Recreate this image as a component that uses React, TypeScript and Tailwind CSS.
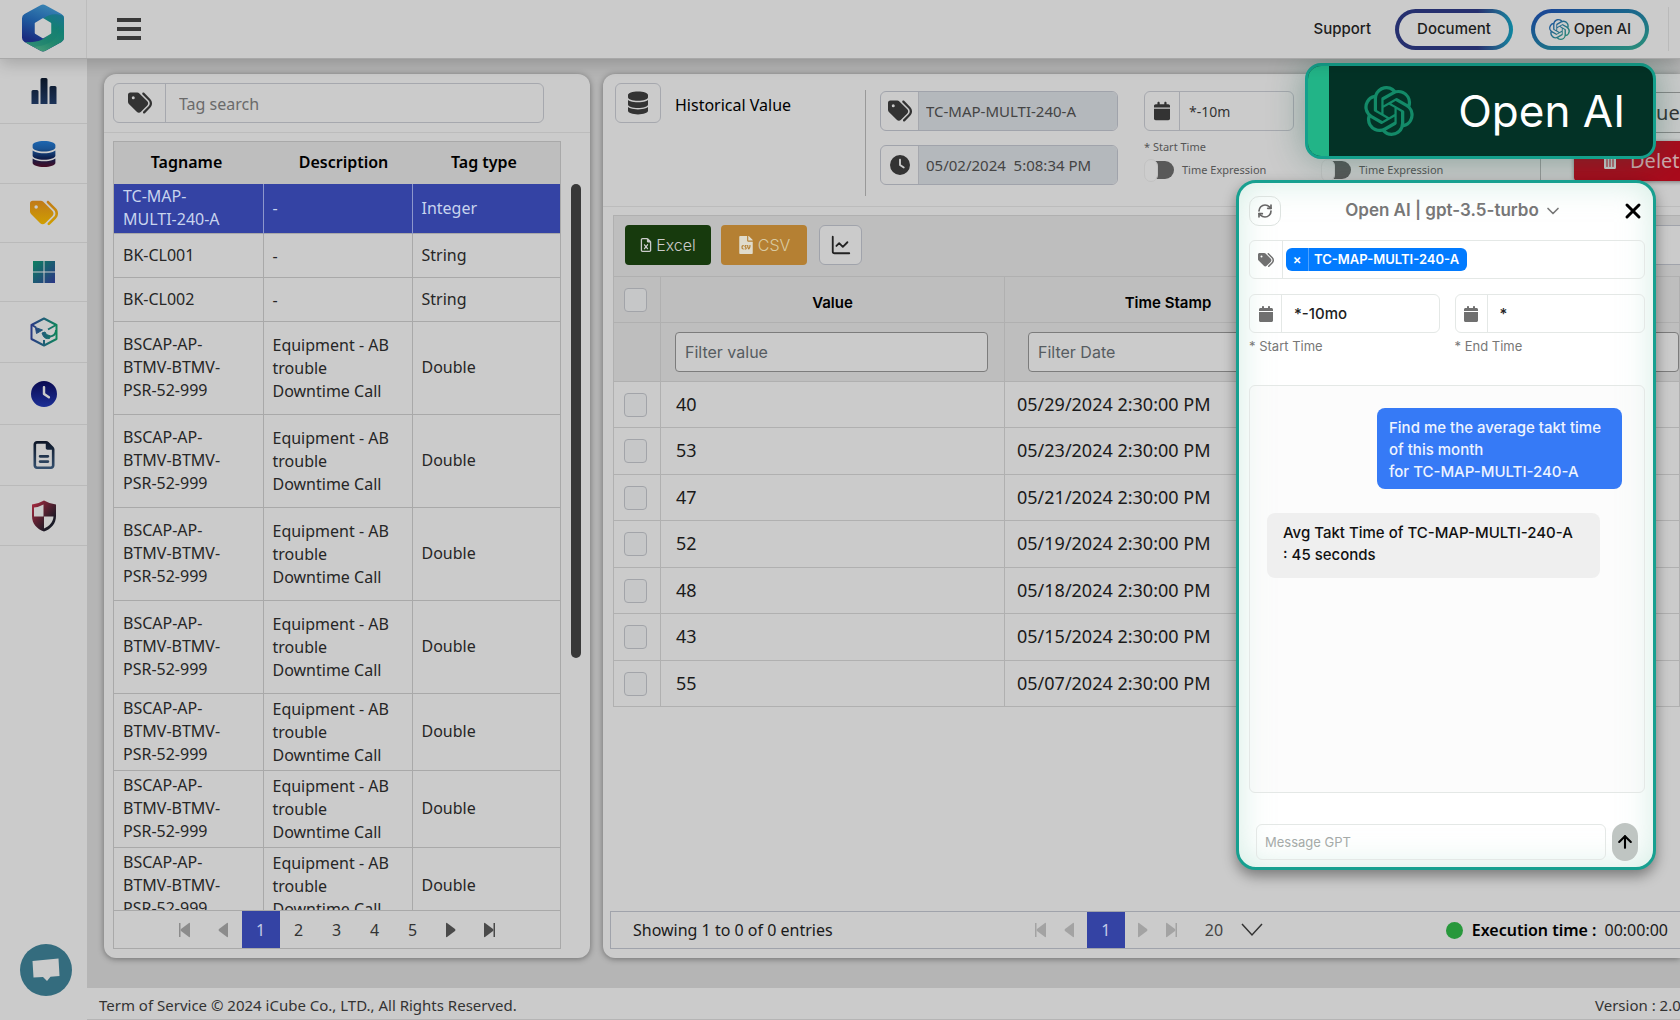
import { useState } from 'react';
import type { ReactNode } from 'react';
import { FaTags, FaDatabase, FaClock, FaRegFileExcel, FaRegFileLines, FaCalendar } from 'react-icons/fa6';
import { FaFileCsv, FaTrashAlt } from 'react-icons/fa';
import { SiOpenai } from 'react-icons/si';
import { ArrowUp, ChevronDown, LineChart, RefreshCw, X } from 'lucide-react';

interface Tag {
  name: string;
  description: string;
  type: string;
  height: string;
}

const BSCAP = { name: 'BSCAP-AP-BTMV-BTMV-PSR-52-999', description: 'Equipment - AB trouble Downtime Call', type: 'Double' };

const TAGS: Tag[] = [
  { name: 'BK-CL001', description: '-', type: 'String', height: 'h-11' },
  { name: 'BK-CL002', description: '-', type: 'String', height: 'h-11' },
  { ...BSCAP, height: 'h-[93px]' },
  { ...BSCAP, height: 'h-[93px]' },
  { ...BSCAP, height: 'h-[93px]' },
  { ...BSCAP, height: 'h-[93px]' },
  { ...BSCAP, height: 'h-[77px]' },
  { ...BSCAP, height: 'h-[77px]' },
  { ...BSCAP, height: 'h-[77px]' },
];

const VALUES = [
  { value: 40, time: '05/29/2024 2:30:00 PM' },
  { value: 53, time: '05/23/2024 2:30:00 PM' },
  { value: 47, time: '05/21/2024 2:30:00 PM' },
  { value: 52, time: '05/19/2024 2:30:00 PM' },
  { value: 48, time: '05/18/2024 2:30:00 PM' },
  { value: 43, time: '05/15/2024 2:30:00 PM' },
  { value: 55, time: '05/07/2024 2:30:00 PM' },
];

function Gradients() {
  const defs = [
    ['g-bars', '#0a1526', '#1c3358'],
    ['g-tags', '#c07a18', '#d0a000'],
    ['g-clock', '#0a0a50', '#1c2f96'],
    ['g-file', '#0c1526', '#34506f'],
  ];
  return (
    <svg className="absolute h-0 w-0" aria-hidden>
      <defs>
        {defs.map(([id, from, to]) => (
          <linearGradient key={id} id={id} x1="0" y1="0" x2="0" y2="1">
            <stop offset="0" stopColor={from} />
            <stop offset="1" stopColor={to} />
          </linearGradient>
        ))}
        <linearGradient id="g-db" x1="0" y1="0" x2="0" y2="1">
          <stop offset="0" stopColor="#1d66b0" />
          <stop offset="0.3" stopColor="#1a5494" />
          <stop offset="0.65" stopColor="#0d1f4c" />
          <stop offset="1" stopColor="#4a0d24" />
        </linearGradient>
        <linearGradient id="g-grid" gradientUnits="userSpaceOnUse" x1="0" y1="0" x2="22" y2="22">
          <stop offset="0" stopColor="#0d8060" />
          <stop offset="1" stopColor="#2b3585" />
        </linearGradient>
        <linearGradient id="g-cube" gradientUnits="userSpaceOnUse" x1="0" y1="0" x2="28" y2="0">
          <stop offset="0" stopColor="#2b3585" />
          <stop offset="0.5" stopColor="#1f6076" />
          <stop offset="1" stopColor="#0d8858" />
        </linearGradient>
        <linearGradient id="g-shield" x1="0" y1="0" x2="1" y2="1">
          <stop offset="0" stopColor="#b02a40" />
          <stop offset="0.75" stopColor="#1c1a26" />
          <stop offset="1" stopColor="#14202e" />
        </linearGradient>
        <linearGradient id="g-ai" x1="0" y1="0" x2="1" y2="1">
          <stop offset="0" stopColor="#1c4fa0" />
          <stop offset="1" stopColor="#2c9070" />
        </linearGradient>
      </defs>
    </svg>
  );
}

function Logo() {
  return (
    <svg className="h-12 w-[42px]" viewBox="0 0 42 48" aria-label="iCube">
      <defs>
        <clipPath id="logo-clip">
          <path d="M18.500 1.200a5 5 0 0 1 5 0l16 8.800a5 5 0 0 1 2.500 4.300v19.400a5 5 0 0 1-2.500 4.300l-16 8.800a5 5 0 0 1-5 0l-16-8.800A5 5 0 0 1 0 33.700V14.300A5 5 0 0 1 2.500 10z" />
        </clipPath>
        <linearGradient id="logo-l" x1="0.6" y1="0" x2="0.3" y2="1">
          <stop offset="0" stopColor="#3a86b4" />
          <stop offset="0.4" stopColor="#1f5ca0" />
          <stop offset="0.8" stopColor="#1a2c80" />
        </linearGradient>
        <linearGradient id="logo-r" x1="0.9" y1="0" x2="0.4" y2="1">
          <stop offset="0" stopColor="#1c7490" />
          <stop offset="0.35" stopColor="#138074" />
          <stop offset="0.7" stopColor="#22886e" />
          <stop offset="1" stopColor="#459a78" />
        </linearGradient>
      </defs>
      <g clipPath="url(#logo-clip)">
        <path d="M0 0h42v48H0z" fill="url(#logo-l)" />
        <path d="M21 15C26 10 34 9 42 12v36H10L4 38c9 1 16-1 21-6z" fill="url(#logo-r)" />
        <path d="M4 38c14 1 26-5 33-16 0 12-8 20-28 21z" fill="#1a8070" opacity="0.5" />
      </g>
      <path d="M21 15l7.500 4.500v9.500L21 33.500 13.500 29v-9.500z" fill="#cbcbcb" stroke="#cbcbcb" strokeWidth="1.500" strokeLinejoin="round" />
    </svg>
  );
}

function BarsIcon() {
  return (
    <svg className="h-[26px] w-[26px]" viewBox="0 0 26 26" fill="url(#g-bars)">
      <path d="M2 12h4a1.500 1.500 0 0 1 1.500 1.500V26h-7V13.500A1.500 1.500 0 0 1 2 12zM11 0h4a1.500 1.500 0 0 1 1.500 1.500V26h-7V1.500A1.500 1.500 0 0 1 11 0zM20 8h4a1.500 1.500 0 0 1 1.500 1.500V26h-7V9.500A1.500 1.500 0 0 1 20 8z" />
    </svg>
  );
}

function GridIcon() {
  return (
    <svg className="h-[22px] w-[22px]" viewBox="0 0 22 22" fill="url(#g-grid)">
      <path d="M0 0h10.500v10.500H0zM11.500 0H22v10.500H11.500zM0 11.500h10.500V22H0zM11.500 11.500H22V22H11.500z" />
    </svg>
  );
}

function CubeIcon() {
  return (
    <svg className="h-[30px] w-7" viewBox="0 0 28 30" fill="none" stroke="url(#g-cube)" strokeWidth="2" strokeLinejoin="round">
      <path d="M14 1.500L26.500 8v14L14 28.500 1.500 22V8z" />
      <path d="M2 8l4 2.500M26 8l-8 4.500M14 23v5" />
      <path d="M5.500 10.500l7 2.500-6 3.500z" fill="url(#g-cube)" strokeWidth="1" />
      <path d="M26 13c0 6-6 8-11 5.500" />
      <path d="M12 16l3-1 1.500 2.500 4 1.500-1 2.500c-3 .5-5-.5-6-2z" fill="url(#g-cube)" strokeWidth="1" />
    </svg>
  );
}

function ShieldIcon() {
  return (
    <svg className="h-8 w-[26px]" viewBox="0 0 26 32">
      <path d="M13 0.500Q19 4 25 4.500V16c0 8-5 13-12 15.500C6 29 1 24 1 16V4.500Q7 4 13 0.500z" fill="url(#g-shield)" />
      <path d="M12.500 4.500v12H3V7.500Q8 7 12.500 4.500zM13 16.500h9.500c-.5 6-4 9.500-9.500 12z" fill="#cbcbcb" />
    </svg>
  );
}

const NAV: { label: string; height: string; icon: ReactNode }[] = [
  { label: 'Dashboard', height: 'h-[65px]', icon: <BarsIcon /> },
  { label: 'Database', height: 'h-[60px]', icon: <FaDatabase className="h-[26px] w-6" fill="url(#g-db)" /> },
  { label: 'Tags', height: 'h-[59px]', icon: <FaTags className="h-7 w-7" fill="url(#g-tags)" /> },
  { label: 'Display', height: 'h-[59px]', icon: <GridIcon /> },
  { label: 'Assets', height: 'h-[61px]', icon: <CubeIcon /> },
  { label: 'History', height: 'h-[62px]', icon: <FaClock className="h-[26px] w-[26px]" fill="url(#g-clock)" /> },
  { label: 'Report', height: 'h-[61px]', icon: <FaRegFileLines className="h-7 w-6" fill="url(#g-file)" /> },
  { label: 'Security', height: 'h-[60px]', icon: <ShieldIcon /> },
];

function Sidebar() {
  return (
    <aside className="flex w-[87px] shrink-0 flex-col bg-[#cbcbcb]">
      <nav>
        {NAV.map((item) => (
          <a
            key={item.label}
            href="#"
            aria-label={item.label}
            className={`flex items-center justify-center border-b border-[#bababa] pl-px ${item.height}`}
          >
            {item.icon}
          </a>
        ))}
      </nav>
      <button
        type="button"
        aria-label="Chat"
        className="mt-auto mb-6 ml-5 flex h-[52px] w-[52px] items-center justify-center rounded-full bg-[#346c7e]"
      >
        <svg className="h-6 w-7" viewBox="0 0 28 24" fill="#cbcbcb">
          <path d="M0.500 3L26.500 0.500 27.500 18l-9 .8-3.500 4.200-4-4L1.500 19.500z" />
        </svg>
      </button>
    </aside>
  );
}

function Header() {
  return (
    <header className="relative z-10 flex h-[59px] shrink-0 items-center border-b border-[#a8a8a8] bg-[#cbcbcb] font-['Inter',sans-serif] shadow-[0_4px_16px_rgba(0,0,0,0.2)]">
      <div className="flex h-full w-[87px] items-center justify-center border-r border-[#bdbdbd] pb-[3px]">
        <Logo />
      </div>
      <button type="button" aria-label="Menu" className="ml-[30px] flex flex-col gap-[5px]">
        <span className="h-1 w-6 bg-[#383838]" />
        <span className="h-1 w-6 bg-[#383838]" />
        <span className="h-1 w-6 bg-[#383838]" />
      </button>
      <div className="mr-[11px] ml-auto flex items-center text-[15px] font-medium text-[#1d1d1d]">
        <a href="#" className="mr-6">Support</a>
        <a href="#" className="mr-[18px] rounded-full bg-linear-to-r from-[#26306f] from-70% to-[#0a86a0] p-1">
          <span className="flex h-[33px] w-[110px] items-center justify-center rounded-full bg-[#cbcbcb]">Document</span>
        </a>
        <a href="#" className="mr-[19px] rounded-full bg-linear-to-br from-[#1c3f96] to-[#2c9078] p-1">
          <span className="flex h-[33px] w-[110px] items-center justify-center gap-1 rounded-full bg-[#cbcbcb]">
            <SiOpenai className="h-[21px] w-[21px]" fill="url(#g-ai)" />
            Open AI
          </span>
        </a>
        <span className="h-11 w-px bg-[#bababa]" />
      </div>
    </header>
  );
}

function PrevIcon({ bar }: { bar?: boolean }) {
  return (
    <svg className="h-4 w-[14px]" viewBox="0 0 14 16" fill="currentColor">
      {bar && <path d="M1 1h1.500v14H1z" />}
      <path d="M12 1.500v13q0 1-1 .5L3 9Q2 8 3 7l8-6q1-.5 1 .5z" />
    </svg>
  );
}

function NextIcon({ bar }: { bar?: boolean }) {
  return (
    <svg className="h-4 w-[14px]" viewBox="0 0 14 16" fill="currentColor">
      {bar && <path d="M11.500 1H13v14h-1.500z" />}
      <path d="M2 1.500v13q0 1 1 .5l8-6q1-1 0-2L3 1Q2 .5 2 1.500z" />
    </svg>
  );
}

function Pager({ pages, disabled }: { pages: number[]; disabled?: boolean }) {
  const prev = disabled ? 'text-[#a3a3a3]' : 'text-[#8c8c8c]';
  const next = disabled ? 'text-[#a3a3a3]' : 'text-[#4a4a4a]';
  const step = disabled ? 'w-7' : 'w-[38px]';
  return (
    <div className="flex h-full items-center text-base text-[#333]">
      <button type="button" aria-label="First page" className={`flex justify-center ${step} ${prev}`}><PrevIcon bar /></button>
      <button type="button" aria-label="Previous page" className={`flex justify-center ${step} ${prev}`}><PrevIcon /></button>
      {pages.map((page) => (
        <button
          key={page}
          type="button"
          className={`h-full w-[38px] ${page === 1 ? 'bg-[#3443a4] text-[#c3cbe8]' : ''} ${disabled ? 'mx-1' : ''}`}
        >
          {page}
        </button>
      ))}
      <button type="button" aria-label="Next page" className={`flex justify-center ${step} ${next}`}><NextIcon /></button>
      <button type="button" aria-label="Last page" className={`flex justify-center ${step} ${next}`}><NextIcon bar /></button>
    </div>
  );
}

function TagPanel() {
  return (
    <section className="flex w-[486px] shrink-0 flex-col rounded-xl bg-[#cbcbcb] shadow-[0_1px_6px_rgba(0,0,0,0.4)]">
      <div className="border-b border-[#bcbcbc] py-[9px] pl-[9px]">
        <div className="flex h-10 w-[431px] items-center rounded-md border border-[#a6a8ae]">
          <label htmlFor="tag-search" aria-label="Tag search" className="flex h-full w-[52px] items-center justify-center border-r border-[#a6a8ae]">
            <FaTags className="h-6 w-6 text-[#333]" />
          </label>
          <input id="tag-search" placeholder="Tag search" className="min-w-0 flex-1 px-[13px] pt-[2px] text-base outline-none placeholder:text-[#6a6a6a]" />
        </div>
      </div>
      <div className="mx-[9px] mt-2 mb-[9px] flex min-h-0 flex-1 flex-col">
        <div className="flex min-h-0 flex-1">
          <div className="w-[448px] overflow-hidden border-x border-t border-[#a9a9a9]">
            <table className="w-full table-fixed border-collapse text-left text-base leading-[23px] text-[#262626]">
              <thead>
                <tr className="h-[42px] bg-[#bebebe] text-center text-black">
                  <th className="w-[149px] pr-1 pb-[2px] font-semibold">Tagname</th>
                  <th className="w-[149px] pb-[2px] pl-3 font-semibold">Description</th>
                  <th className="pr-1 pb-[2px] font-semibold">Tag type</th>
                </tr>
              </thead>
              <tbody>
                <tr className="h-[49px] border-b border-[#a9a9a9] bg-[#3443a4] text-[#c8d4ee]">
                  <td className="border-r border-[#8d97cc] pl-[9px]">TC-MAP-<br />MULTI-240-A</td>
                  <td className="border-r border-[#8d97cc] pl-[9px]">-</td>
                  <td className="pl-[9px]">Integer</td>
                </tr>
                {TAGS.map((tag, i) => (
                  <tr key={i} className={`border-b border-[#a9a9a9] ${tag.height}`}>
                    <td className="border-r border-[#a9a9a9] pr-7 pl-[9px]">{tag.name}</td>
                    <td className="border-r border-[#a9a9a9] pt-[2px] pr-4 pl-[9px]">{tag.description}</td>
                    <td className="pl-[9px]">{tag.type}</td>
                  </tr>
                ))}
              </tbody>
            </table>
          </div>
          <div className="mt-[43px] ml-[10px] h-[474px] w-[10px] rounded-full bg-[#383838]" />
        </div>
        <div className="flex h-[39px] w-[448px] justify-center border border-[#a9a9a9] pr-px">
          <Pager pages={[1, 2, 3, 4, 5]} />
        </div>
      </div>
    </section>
  );
}

function TimeExpression({ id }: { id: string }) {
  return (
    <div className="mt-[3px] flex items-center gap-2 text-[11px] text-[#555]">
      <label htmlFor={id} aria-label="Time expression" className="flex h-6 w-[30px] items-center">
        <input id={id} type="checkbox" className="peer sr-only" />
        <span className="flex h-[18px] w-full items-center rounded-full bg-[#595959]">
          <span className="h-[23px] w-[14px] rounded-full border border-[#c2c2c2] bg-[#cdcdcd]" />
        </span>
      </label>
      <label htmlFor={id}>Time Expression</label>
    </div>
  );
}

function TimeField({ id, label, defaultValue }: { id: string; label: string; defaultValue?: string }) {
  return (
    <div className="w-[150px]">
      <div className="flex h-10 items-center rounded-md border border-[#a6a8ae]">
        <label htmlFor={id} aria-label={label} className="flex h-full w-[35px] items-center justify-center border-r border-[#a6a8ae]">
          <FaCalendar className="h-5 w-4 text-[#333]" />
        </label>
        <input id={id} defaultValue={defaultValue} className="min-w-0 flex-1 px-[9px] pt-[2px] text-sm text-[#333] outline-none" />
      </div>
      <div className="mt-2 text-[11px] leading-4 text-[#555]">* {label}</div>
      <TimeExpression id={`${id}-expression`} />
    </div>
  );
}

function ReadOnlyField({ icon, label, value }: { icon: ReactNode; label: string; value: string }) {
  return (
    <div className="flex h-10 w-[238px] items-center overflow-hidden rounded-md border border-[#a0a3ab] text-[#333]">
      <span className="flex h-full w-[37px] shrink-0 items-center justify-center">{icon}</span>
      <input aria-label={label} readOnly value={value} className="h-full min-w-0 flex-1 border-l border-[#a6a8ae] bg-[#b4b8bc] px-[7px] text-[15px] text-[#444] outline-none" />
    </div>
  );
}

function Checkbox({ label }: { label: string }) {
  return (
    <input
      type="checkbox"
      aria-label={label}
      className="ml-[10px] block h-6 w-[23px] appearance-none rounded border border-[#a2a4a9] bg-[#c6c7c8] checked:bg-[#3443a4]"
    />
  );
}

function HistoricalPanel() {
  const cell = 'border border-[#b0b0b0]';
  const filter = 'h-10 w-full rounded border border-[#7c7c7c] bg-[#cbcbcb] px-[9px] text-base font-normal outline-none placeholder:text-[#565c61]';
  return (
    <section className="flex min-w-0 flex-1 flex-col overflow-hidden rounded-l-xl bg-[#cbcbcb] shadow-[0_1px_6px_rgba(0,0,0,0.4)]">
      <div className="flex h-[133px] shrink-0 border-b border-[#bcbcbc] pl-3 *:shrink-0">
        <div className="mt-[9px] flex h-10 w-[46px] items-center justify-center rounded-md border border-[#a6a8ae]">
          <FaDatabase className="h-6 w-5 text-[#333]" />
        </div>
        <h1 className="mt-[19px] ml-[14px] w-[190px] text-base leading-6 text-black">Historical Value</h1>
        <div className="mt-4 h-[106px] border-r border-[#999]" />
        <div className="mt-[17px] ml-[14px] flex flex-col gap-[14px]">
          <ReadOnlyField label="Tag" icon={<FaTags className="h-6 w-6" />} value="TC-MAP-MULTI-240-A" />
          <ReadOnlyField label="Snapshot time" icon={<FaClock className="h-5 w-5" />} value="05/02/2024  5:08:34 PM" />
        </div>
        <div className="mt-[17px] ml-[26px] flex gap-[27px]">
          <TimeField id="start" label="Start Time" defaultValue="*-10m" />
          <TimeField id="end" label="End Time" />
        </div>
        <div className="mt-4 ml-[69px] h-[106px] border-r border-[#999]" />
        <div className="mt-[18px] ml-[33px] flex flex-col gap-2 text-xl">
          <button type="button" className="h-[41px] w-[150px] rounded border border-[#888] pl-3 text-left text-[#333]">Add value</button>
          <button type="button" className="flex h-10 w-[150px] items-center gap-3 rounded-sm bg-[#a90b1c] pl-7 text-[#cfa8ac] shadow-[0_1px_4px_rgba(0,0,0,0.4)]">
            <FaTrashAlt className="h-4 w-4 text-[#cbcbcb]" />
            Delete
          </button>
        </div>
      </div>
      <div className="mt-2 ml-[10px] font-['Inter',sans-serif]">
        <div className="flex h-[61px] items-center border-t border-l border-[#b0b0b0] bg-[#bebebe] pb-[3px] pl-[11px]">
          <button type="button" className="flex h-10 w-[86px] items-center justify-center gap-1 rounded-sm bg-[#173a0d] text-base font-light text-[#cbcbcb]">
            <FaRegFileExcel className="h-[14px] w-3" />
            Excel
          </button>
          <button type="button" className="ml-[10px] flex h-10 w-[86px] items-center justify-center gap-1 rounded-sm bg-[#b58033] text-base font-light text-[#d9cba2]">
            <FaFileCsv className="h-[18px] w-4 text-[#e0dccd]" />
            CSV
          </button>
          <button type="button" aria-label="Chart" className="ml-3 flex h-10 w-[43px] items-center justify-center rounded-md border border-[#a0a3ab] bg-[#cbcbcb] text-[#222]">
            <LineChart className="h-[22px] w-[22px]" />
          </button>
          <input aria-label="Search values" className="mr-[-20px] ml-auto h-10 w-[200px] rounded border border-[#a0a3ab] bg-[#cbcbcb]" />
        </div>
        <table className="w-full table-fixed border-collapse text-[#1a1a1a]">
          <thead className="bg-[#bebebe] text-[15px] text-black">
            <tr className="h-[46px]">
              <th className={`w-[47px] ${cell}`}><Checkbox label="Select all" /></th>
              <th className={`w-[344px] pt-[7px] font-semibold ${cell}`}>Value</th>
              <th className={`w-[327px] pt-[7px] font-semibold ${cell}`}>Time Stamp</th>
              <th className={`pt-[7px] font-semibold ${cell}`}>Status</th>
            </tr>
            <tr className="h-[59px]">
              <td className={cell} />
              <td className={`pr-4 pl-[14px] ${cell}`}><input aria-label="Filter value" placeholder="Filter value" className={filter} /></td>
              <td className={`px-[23px] ${cell}`}><input aria-label="Filter date" placeholder="Filter Date" className={filter} /></td>
              <td className={`pl-[23px] ${cell}`}><input aria-label="Filter status" className={filter} /></td>
            </tr>
          </thead>
          <tbody className="font-['Noto_Sans',sans-serif] text-lg">
            {VALUES.map((row) => (
              <tr key={row.time} className="h-[46px] even:h-[47px]">
                <td className={cell}><Checkbox label={`Select ${row.time}`} /></td>
                <td className={`pb-[2px] pl-[15px] ${cell}`}>{row.value}</td>
                <td className={`pb-[2px] pl-3 ${cell}`}>{row.time}</td>
                <td className={cell} />
              </tr>
            ))}
          </tbody>
        </table>
      </div>
      <div className="mt-auto mb-[9px] ml-[7px] flex h-[38px] items-center border-y border-l border-[#a0a3ab] text-base whitespace-nowrap text-[#1a1a1a]">
        <span className="ml-[22px]">Showing 1 to 0 of 0 entries</span>
        <div className="ml-auto h-full"><Pager pages={[1]} disabled /></div>
        <select aria-label="Rows per page" className="ml-5 w-9 appearance-none text-base text-[#444]">
          <option>20</option>
        </select>
        <svg className="h-4 w-[22px]" viewBox="0 0 22 16" fill="none" stroke="#333" strokeWidth="1.500">
          <path d="M1 2l10 11L21 2" />
        </svg>
        <span className="ml-[183px] h-[17px] w-[17px] rounded-full bg-[#28983c]" />
        <span className="ml-[9px] font-semibold text-black">Execution time :</span>
        <span className="mr-3 ml-2">00:00:00</span>
      </div>
    </section>
  );
}

function OpenAiBanner() {
  return (
    <div className="absolute top-[63px] right-6 flex h-[96px] w-[351px] items-center overflow-hidden rounded-2xl border-3 border-[#14a08c] bg-[#033226] shadow-[0_0_36px_rgba(20,90,70,0.4)]">
      <div className="h-full w-[21px] bg-[#22b487]" />
      <SiOpenai className="ml-[35px] h-[50px] w-[50px] text-[#138a68]" />
      <span className="mr-7 ml-auto font-['Inter',sans-serif] text-[44px] leading-none text-white">Open AI</span>
    </div>
  );
}

function ChatTimeField({ id, label, defaultValue }: { id: string; label: string; defaultValue: string }) {
  return (
    <div className="min-w-0 flex-1">
      <div className="flex h-[39px] items-center rounded-md border border-[#e4e8e6]">
        <span className="flex h-full w-8 shrink-0 items-center justify-center border-r border-[#e4e8e6]">
          <FaCalendar className="h-4 w-[14px] text-[#707070]" />
        </span>
        <input id={id} defaultValue={defaultValue} className="min-w-0 flex-1 px-3 pt-px text-[15px] font-medium text-[#222] outline-none" />
      </div>
      <label htmlFor={id} className="mt-[3px] block text-[13px] leading-5 text-[#777]">* {label}</label>
    </div>
  );
}

function ChatWindow({ onClose }: { onClose: () => void }) {
  return (
    <div
      role="dialog"
      aria-label="Open AI"
      className="absolute top-[180px] right-6 flex h-[690px] w-[420px] flex-col rounded-[20px] border-3 border-[#17a090] bg-white pr-2 pb-[6px] pl-[10px] font-['Inter',sans-serif] shadow-[0_6px_14px_rgba(0,0,0,0.4),inset_0_0_32px_rgba(170,220,202,0.5)]"
    >
      <div className="mt-[13px] flex h-[30px] items-center">
        <button type="button" aria-label="Restart conversation" className="flex h-[30px] w-8 items-center justify-center rounded-[10px] border border-[#dde3e0] text-[#666]">
          <RefreshCw className="h-4 w-4" strokeWidth={2.5} />
        </button>
        <button type="button" className="mx-auto flex items-center gap-1 pl-[6px] text-[17px] font-semibold text-[#777]">
          Open AI | gpt-3.5-turbo
          <ChevronDown className="h-5 w-5" strokeWidth={2} />
        </button>
        <button type="button" aria-label="Close" onClick={onClose} className="text-black">
          <X className="h-6 w-6" strokeWidth={3} />
        </button>
      </div>
      <div className="mt-[14px] flex h-[39px] shrink-0 items-center rounded-md border border-[#e4e8e6]">
        <span className="flex h-full w-[33px] items-center justify-center border-r border-[#e4e8e6]">
          <FaTags className="h-4 w-4 text-[#707070]" />
        </span>
        <span className="ml-[3px] flex h-[23px] items-center overflow-hidden rounded-md bg-[#027bff] text-[13px] font-semibold text-white">
          <button type="button" aria-label="Remove tag" className="h-full w-[23px] border-r border-[#4fa2ff]">×</button>
          <span className="pr-2 pl-[5px]">TC-MAP-MULTI-240-A</span>
        </span>
      </div>
      <div className="mt-[15px] flex gap-[15px]">
        <ChatTimeField id="chat-start" label="Start Time" defaultValue="*-10mo" />
        <ChatTimeField id="chat-end" label="End Time" defaultValue="*" />
      </div>
      <div className="mt-[29px] flex flex-1 flex-col items-start rounded-md border border-[#e4e8e6] bg-[#f4f4f4]/30 px-[17px] pt-[22px] text-[15px] leading-[22px]">
        <p className="mr-[5px] w-[245px] self-end rounded-lg bg-[#367af6] pt-[9px] pr-2 pb-[6px] pl-3 font-medium text-[#eef4ff]">
          Find me the average takt time of this month<br />for TC-MAP-MULTI-240-A
        </p>
        <p className="mt-6 w-[333px] rounded-lg bg-[#efefef] px-4 pt-[9px] pb-3 font-medium text-[#111]">
          Avg Takt Time of TC-MAP-MULTI-240-A<br />: 45 seconds
        </p>
      </div>
      <form className="mt-[30px] flex items-center gap-[6px] pr-[7px] pl-[7px]">
        <input aria-label="Message GPT" placeholder="Message GPT" className="h-9 min-w-0 flex-1 rounded-md border border-[#e4e8e6] px-2 text-[13px] outline-none placeholder:text-[#a5aaa8]" />
        <button type="button" aria-label="Send" className="flex h-[38px] w-[26px] items-center justify-center rounded-full bg-[#bfc5c2] text-black">
          <ArrowUp className="h-5 w-5" strokeWidth={2.5} />
        </button>
      </form>
    </div>
  );
}

export default function App() {
  const [chatOpen, setChatOpen] = useState(true);

  return (
    <div className="relative flex h-screen flex-col overflow-hidden bg-[#b5b5b5] font-['Noto_Sans',sans-serif]">
      <Gradients />
      <Header />
      <div className="flex min-h-0 flex-1">
        <Sidebar />
        <main className="flex min-w-0 flex-1 flex-col">
          <div className="flex min-h-0 flex-1 gap-[13px] pt-[15px] pb-[30px] pl-[17px]">
            <TagPanel />
            <HistoricalPanel />
          </div>
          <footer className="flex h-8 shrink-0 items-center justify-between overflow-hidden border-b border-[#b5b5b5] bg-[#cbcbcb] pt-1 pl-3 text-[15px] whitespace-nowrap text-[#333]">
            <span>Term of Service © 2024 iCube Co., LTD., All Rights Reserved.</span>
            <span className="w-[85px]">Version : 2.0.0</span>
          </footer>
        </main>
      </div>
      <OpenAiBanner />
      {chatOpen && <ChatWindow onClose={() => setChatOpen(false)} />}
    </div>
  );
}
